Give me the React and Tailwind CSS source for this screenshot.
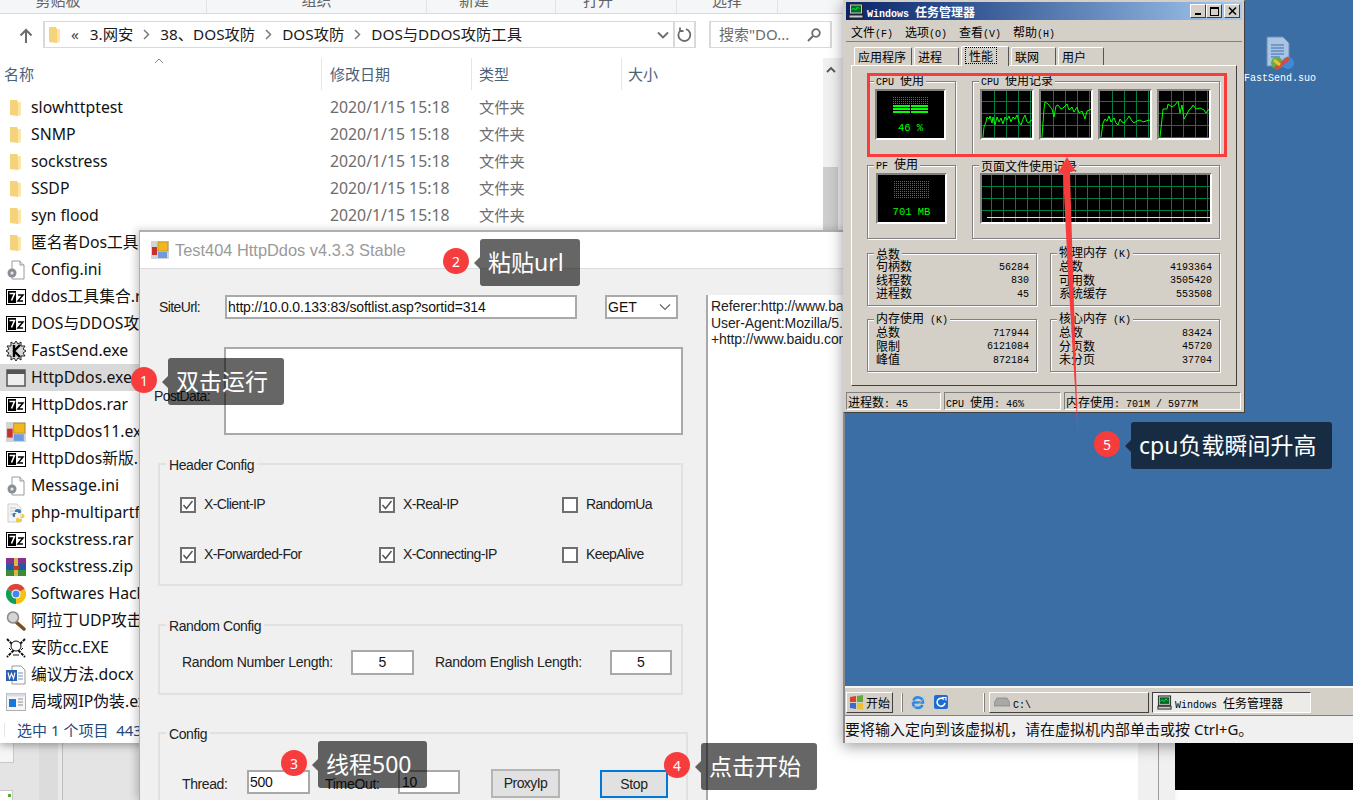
const CJK = "font-['Noto_Sans','Noto_Sans_CJK_SC',sans-serif]";

function Folder() {
  return (
    <svg width="14" height="18" viewBox="0 0 14 18">
      <path d="M1 1h7l1 2v14l-8-1z" fill="#f5d37a" />
      <path d="M9 3l3 0v13l-3 1z" fill="#fbe6a8" />
    </svg>
  );
}

function GearDoc() {
  return (
    <svg width="20" height="20" viewBox="0 0 20 20">
      <path d="M6 1h8l4 4v14H6z" fill="#fff" stroke="#9a9a9a" />
      <path d="M14 1v4h4" fill="#e5e5e5" stroke="#9a9a9a" />
      <circle cx="6" cy="13" r="4.5" fill="#8a8f96" />
      <circle cx="6" cy="13" r="1.6" fill="#e8e8e8" />
    </svg>
  );
}

function SevenZ() {
  return (
    <svg width="20" height="16" viewBox="0 0 20 16">
      <rect x="0.5" y="0.5" width="19" height="15" fill="#fff" stroke="#000" />
      <rect x="2" y="2" width="8" height="12" fill="#000" />
      <path d="M3.5 4.5h5l-3 7" fill="none" stroke="#fff" strokeWidth="1.6" />
      <path d="M12 6h5l-5 6h5" fill="none" stroke="#000" strokeWidth="1.5" />
    </svg>
  );
}

function KBurst() {
  return (
    <svg width="20" height="20" viewBox="0 0 20 20">
      <path d="M10 0l2 3 3-2 0 4 4 0-2 3 3 2-3 2 2 3-4 0 0 4-3-2-2 3-2-3-3 2 0-4-4 0 2-3-3-2 3-2-2-3 4 0 0-4 3 2z" fill="#d8d8d8" stroke="#222" strokeWidth="1" />
      <path d="M8 4v12M14 4l-6 6 6 6" fill="none" stroke="#000" strokeWidth="2.4" />
    </svg>
  );
}

function WinExe() {
  return (
    <svg width="20" height="18" viewBox="0 0 20 18">
      <rect x="1" y="1" width="18" height="16" fill="#eee" stroke="#555" strokeWidth="1.5" />
      <rect x="1" y="1" width="18" height="4" fill="#555" />
    </svg>
  );
}

function AppSquares({ size = 18 }) {
  return (
    <svg width={size} height={size} viewBox="0 0 18 18">
      <rect width="18" height="18" fill="#d4d4d4" />
      <rect x="7" y="1" width="10" height="9" fill="#f0b820" stroke="#a97f10" strokeWidth="0.6" />
      <rect x="1" y="6" width="5" height="8" fill="#c9302c" />
      <rect x="7" y="11" width="9" height="6" fill="#6d9be0" />
    </svg>
  );
}

function PyDoc() {
  return (
    <svg width="20" height="20" viewBox="0 0 20 20">
      <path d="M2 1h9l4 4v14H2z" fill="#f4f4f4" stroke="#cfcfcf" />
      <path d="M4 5h6M4 8h5M4 11h4" stroke="#c4c4c4" />
      <path d="M12 6c-3 0-3 1-3 3h3v1H8c-2 0-2 4 0 4h1v-2c0-1 1-2 2-2h3c1 0 1-1 1-2V8c0-1-1-2-3-2z" fill="#3c78aa" />
      <path d="M13 19c3 0 3-1 3-3h-3v-1h4c2 0 2-4 0-4h-1v2c0 1-1 2-2 2h-3c-1 0-1 1-1 2v1c0 1 1 2 3 1z" fill="#f5c93c" />
    </svg>
  );
}

function RarStack() {
  return (
    <svg width="20" height="18" viewBox="0 0 20 18">
      <rect width="20" height="6" fill="#8a2f8f" />
      <rect y="6" width="20" height="6" fill="#2458a6" />
      <rect y="12" width="20" height="6" fill="#3f8a3a" />
      <rect x="8" width="4" height="18" fill="#d9b64c" />
      <rect x="7" y="8" width="6" height="4" fill="#b5402c" />
    </svg>
  );
}

function ChromeIcon() {
  return (
    <svg width="20" height="20" viewBox="0 0 20 20">
      <path d="M10 10L1.3 5A10 10 0 0 1 18.7 5z" fill="#db4437" />
      <path d="M10 10L18.7 5A10 10 0 0 1 10 20z" fill="#f4c20d" />
      <path d="M10 10L10 20A10 10 0 0 1 1.3 5z" fill="#0f9d58" />
      <circle cx="10" cy="10" r="4.6" fill="#fff" />
      <circle cx="10" cy="10" r="3.5" fill="#4285f4" />
    </svg>
  );
}

function Magnifier() {
  return (
    <svg width="20" height="20" viewBox="0 0 20 20">
      <path d="M10 11l8 7" stroke="#7a4f22" strokeWidth="3.5" strokeLinecap="round" />
      <circle cx="7" cy="6.5" r="5.5" fill="#d5d5d5" stroke="#8a8a8a" strokeWidth="1.5" />
    </svg>
  );
}

function CrossBones() {
  return (
    <svg width="20" height="20" viewBox="0 0 20 20">
      <path d="M1 1l18 18M19 1L1 19" stroke="#111" strokeWidth="2" strokeDasharray="3 1" />
      <circle cx="10" cy="8" r="5" fill="#fff" stroke="#111" />
      <path d="M3 10l2 2M17 10l-2 2M7 17h6" stroke="#111" />
    </svg>
  );
}

function WordDoc() {
  return (
    <svg width="20" height="20" viewBox="0 0 20 20">
      <path d="M6 1h9l4 4v14H6z" fill="#fff" stroke="#9a9a9a" />
      <path d="M12 8h5M12 11h5M12 14h5" stroke="#6a8fc8" />
      <rect x="0" y="5" width="11" height="11" fill="#2b5fb4" />
      <path d="M2 7.5l1.5 6 2-5 2 5 1.5-6" fill="none" stroke="#fff" strokeWidth="1.1" />
    </svg>
  );
}

function BlueWin() {
  return (
    <svg width="20" height="18" viewBox="0 0 20 18">
      <rect x="0.5" y="0.5" width="19" height="17" fill="#f6f6f6" stroke="#b0b0b0" />
      <rect x="0.5" y="0.5" width="19" height="3" fill="#d5dbe5" />
      <rect x="3" y="6" width="7" height="8" fill="#1a78d8" />
      <path d="M12 6h5M12 9h5M12 12h5" stroke="#8a8a8a" />
    </svg>
  );
}

const files = [
  { name: "slowhttptest", icon: <Folder />, date: "2020/1/15 15:18", type: "文件夹" },
  { name: "SNMP", icon: <Folder />, date: "2020/1/15 15:18", type: "文件夹" },
  { name: "sockstress", icon: <Folder />, date: "2020/1/15 15:18", type: "文件夹" },
  { name: "SSDP", icon: <Folder />, date: "2020/1/15 15:18", type: "文件夹" },
  { name: "syn flood", icon: <Folder />, date: "2020/1/15 15:18", type: "文件夹" },
  { name: "匿名者Dos工具包", icon: <Folder /> },
  { name: "Config.ini", icon: <GearDoc /> },
  { name: "ddos工具集合.rar", icon: <SevenZ /> },
  { name: "DOS与DDOS攻防工具.rar", icon: <SevenZ /> },
  { name: "FastSend.exe", icon: <KBurst /> },
  { name: "HttpDdos.exe", icon: <WinExe />, selected: true },
  { name: "HttpDdos.rar", icon: <SevenZ /> },
  { name: "HttpDdos11.exe", icon: <AppSquares size={20} /> },
  { name: "HttpDdos新版.rar", icon: <SevenZ /> },
  { name: "Message.ini", icon: <GearDoc /> },
  { name: "php-multipartform-dos.py", icon: <PyDoc /> },
  { name: "sockstress.rar", icon: <SevenZ /> },
  { name: "sockstress.zip", icon: <RarStack /> },
  { name: "Softwares Hacking", icon: <ChromeIcon /> },
  { name: "阿拉丁UDP攻击器.exe", icon: <Magnifier /> },
  { name: "安防cc.EXE", icon: <CrossBones /> },
  { name: "编议方法.docx", icon: <WordDoc /> },
  { name: "局域网IP伪装.exe", icon: <BlueWin /> },
];

function Explorer() {
  return (
    <div className={`relative h-[743px] w-[843px] overflow-hidden bg-white shadow-[0_2px_8px_rgba(0,0,0,0.35)] ${CJK}`}>
      {/* ribbon, cut off at the top of the shot */}
      <div className="flex h-[14px] overflow-hidden border-b border-[#dadbdc] bg-[#f5f6f7] text-[15px] leading-[15px] text-[#5f6368]">
        <div className="-mt-[7px] flex w-[207px] justify-center border-r border-[#e1e3e6] pr-[90px]">剪贴板</div>
        <div className="-mt-[7px] flex w-[220px] justify-center border-r border-[#e1e3e6]">组织</div>
        <div className="-mt-[7px] flex w-[129px] justify-center border-r border-[#e1e3e6] pr-[34px]">新建</div>
        <div className="-mt-[7px] flex w-[121px] justify-center border-r border-[#e1e3e6] pr-[36px]">打开</div>
        <div className="-mt-[7px] flex w-[101px] justify-center border-r border-[#e1e3e6]">选择</div>
      </div>

      {/* address row */}
      <div className="flex h-[44px] items-start pt-[7px]">
        <svg width="16" height="18" viewBox="0 0 16 18" className="ml-[18px] mr-[9px] mt-[6px]">
          <path d="M8 16V3M2.5 8.5L8 3l5.500 5.500" fill="none" stroke="#6b6b6b" strokeWidth="2" />
        </svg>
        <div className="flex h-[27px] w-[653px] items-center border-2 border-y-[1.5px] border-[#d9d9d9] text-[15.300px] text-[#1a1a1a]">
          <span className="ml-[3px]"><Folder /></span>
          <span className="ml-[9px] text-[#444]">«</span>
          <span className="ml-[11px]">3.网安</span>
          <Chev />
          <span>38、DOS攻防</span>
          <Chev />
          <span>DOS攻防</span>
          <Chev />
          <span>DOS与DDOS攻防工具</span>
          <div className="ml-auto flex h-full w-[20px] items-center justify-center">
            <svg width="12" height="8" viewBox="0 0 12 8"><path d="M1 1.500l5 5 5-5" fill="none" stroke="#6b6b6b" strokeWidth="1.800" /></svg>
          </div>
          <div className="flex h-full w-[21px] items-center justify-center border-l-2 border-[#d9d9d9]">
            <svg width="16" height="16" viewBox="0 0 16 16"><path d="M9 2.200A6 6 0 1 1 4 3M3 0.500v3.500h3.500" fill="none" stroke="#6b6b6b" strokeWidth="1.800" /></svg>
          </div>
        </div>
        <div className="ml-[13px] flex h-[27px] w-[123px] items-center justify-between border-2 border-y-[1.5px] border-[#d9d9d9] pl-[8px] pr-[9px] text-[15px] text-[#6d6d6d]">
          <span>搜索"DO...</span>
          <svg width="14" height="14" viewBox="0 0 14 14"><circle cx="9" cy="5" r="3.800" fill="none" stroke="#6b6b6b" strokeWidth="1.800" /><path d="M6 8l-5 5" stroke="#6b6b6b" strokeWidth="2" /></svg>
        </div>
      </div>

      <div className="flex h-[685px]">
        <div className="flex w-[823px] flex-col">
          {/* column headers */}
          <div className="relative grid h-[32px] grid-cols-[322px_150px_150px_1fr] text-[15px] text-[#4c607a]">
            <div className="flex items-center border-r border-[#e5e5e5] pl-[4px]">名称</div>
            <div className="flex items-center border-r border-[#e5e5e5] pl-[8px]">修改日期</div>
            <div className="flex items-center border-r border-[#e5e5e5] pl-[7px]">类型</div>
            <div className="flex items-center pl-[6px]">大小</div>
            <svg width="10" height="6" viewBox="0 0 10 6" className="absolute left-[154px] top-0"><path d="M1 5l4-4 4 4" fill="none" stroke="#8a8a8a" /></svg>
          </div>
          {/* rows */}
          <div className="mt-[4px] flex flex-col">
            {files.map((f) => (
              <div key={f.name} className="grid h-[27px] grid-cols-[322px_150px_150px] items-center text-[15.800px] text-[#111]">
                <div className={`flex h-full items-center ${f.selected ? "bg-[#d9d9d9]" : ""}`}>
                  <span className="flex w-[31px] items-center justify-center pl-[1px]">{f.icon}</span>
                  <span className="truncate">{f.name}</span>
                </div>
                <span className="pl-[8px] text-[#6d6d6d]">{f.date}</span>
                <span className="pl-[7px] text-[15.300px] text-[#6d6d6d]">{f.type}</span>
              </div>
            ))}
          </div>
          <div className="mt-[2px] flex h-[26px] items-center pl-[4px] text-[15px] text-[#1f4a80]">
            <span className="mr-[12px] h-[14px] border-l border-[#e5e5e5]"></span>
            选中 1 个项目&nbsp;&nbsp;443 KB
          </div>
        </div>
        <div className="flex w-[20px] flex-col bg-[#f0f0f0]">
          <div className="flex h-[109px] justify-center pr-[5px] pt-[8px]">
            <svg width="10" height="7" viewBox="0 0 10 7"><path d="M1 6l4-4 4 4" fill="none" stroke="#555" strokeWidth="1.800" /></svg>
          </div>
          <div className="h-[300px] w-[15px] bg-[#cdcdcd]"></div>
        </div>
      </div>
    </div>
  );
}

function Chev() {
  return (
    <svg width="7" height="11" viewBox="0 0 7 11" className="mx-[10px]">
      <path d="M1 1l4.500 4.500L1 10" fill="none" stroke="#7a7a7a" strokeWidth="1.500" />
    </svg>
  );
}

/* whatever lies below the explorer window */
function BehindStrip() {
  return (
    <div className="flex h-[57px] w-[140px] bg-[#e4e4e4]">
      <div className="flex w-[39px] flex-col justify-between">
        <div className="h-[20px] w-[14px] border-b border-r border-[#c9c9c9] bg-[#f5f5f5]"></div>
        <div className="h-[10px] w-[13px] border-r border-t border-[#c9c9c9] bg-white">
          <div className="ml-[8px] mt-[3px] h-[3px] w-[3px] bg-[#56b02c]"></div>
        </div>
      </div>
      <div className="w-[19px] bg-[#dcdcdc]"></div>
      <div className="w-[4px] bg-[#e9e9e9]"></div>
      <div className="w-[1px] bg-[#bdbdbd]"></div>
    </div>
  );
}

function Field({ className, children }) {
  return (
    <div className={`flex items-center border-2 border-[#a9a9a9] bg-white text-[#111] ${className}`}>{children}</div>
  );
}

function FormGroup({ title, className, children }) {
  return (
    <div className={`ml-[18px] border-2 border-[#e1e1e1] ${className}`}>
      <div className="-mt-[9px] ml-[6px] h-[18px] w-fit bg-[#f0f0f0] px-[3px] text-[14px] leading-[18px] tracking-[-0.4px] text-[#222]">{title}</div>
      {children}
    </div>
  );
}

function Check({ label, checked }) {
  return (
    <div className="flex h-full items-center gap-[8px] pb-[1px] tracking-[-0.6px]">
      <span className="flex h-[16px] w-[16px] items-center justify-center border-2 border-[#6f6f6f] bg-white">
        {checked && (
          <svg width="12" height="12" viewBox="0 0 12 12"><path d="M1.500 6l3 3.500 6-7.500" fill="none" stroke="#555" strokeWidth="1.500" /></svg>
        )}
      </span>
      <span>{label}</span>
    </div>
  );
}

function HttpDdosWindow() {
  return (
    <div className="absolute left-[139px] top-[230px] flex h-[570px] w-[1036px] flex-col overflow-hidden border-l border-t-2 border-[#b0b0b0] bg-[#f0f0f0] font-['Liberation_Sans',sans-serif] text-[14px] text-[#222] shadow-[-3px_0_8px_rgba(0,0,0,0.2)]">
      <div className="flex h-[37px] shrink-0 items-center border-b border-[#dcdcdc] bg-white pl-[11px] text-[16.400px] text-[#9a9a9a]">
        <AppSquares />
        <span className="ml-[6px]">Test404 HttpDdos v4.3.3 Stable</span>
      </div>
      <div className="flex flex-1">
        <div className="w-[566px] shrink-0">
          <div className="ml-[19px] mt-[26px] flex h-[24px] items-center">
            <span className="w-[66px] pt-[1px] tracking-[-0.6px]">SiteUrl:</span>
            <Field className="h-full w-[352px] pl-[1px] tracking-[-0.15px]">http://10.0.0.133:83/softlist.asp?sortid=314</Field>
            <Field className="ml-[28px] h-full w-[73px] justify-between pl-[1px] pr-[5px]">
              GET
              <svg width="12" height="8" viewBox="0 0 12 8"><path d="M1 1.500l5 5 5-5" fill="none" stroke="#666" strokeWidth="1.200" /></svg>
            </Field>
          </div>
          <div className="ml-[14px] mt-[28px] flex h-[88px] items-center">
            <span className="w-[70px] pt-[10px] tracking-[-0.6px]">PostData:</span>
            <Field className="h-full w-[459px]"></Field>
          </div>

          <FormGroup title="Header Config" className="mt-[28px] h-[123px] w-[525px]">
            <div className="mt-[6px] grid grid-cols-[199px_183px_1fr] pl-[20px]">
              <div className="h-[50px]"><Check label="X-Client-IP" checked /></div>
              <div className="h-[50px]"><Check label="X-Real-IP" checked /></div>
              <div className="h-[50px]"><Check label="RandomUa" /></div>
              <div className="h-[50px]"><Check label="X-Forwarded-For" checked /></div>
              <div className="h-[50px]"><Check label="X-Connecting-IP" checked /></div>
              <div className="h-[50px]"><Check label="KeepAlive" /></div>
            </div>
          </FormGroup>

          <FormGroup title="Random Config" className="mt-[38px] h-[71px] w-[525px]">
            <div className="mt-[15px] flex h-[25px] items-center pl-[22px]">
              <span className="w-[169px] tracking-[-0.3px]">Random Number Length:</span>
              <Field className="h-full w-[63px] justify-center">5</Field>
              <span className="ml-[21px] w-[175px] tracking-[-0.3px]">Random English Length:</span>
              <Field className="h-full w-[62px] justify-center">5</Field>
            </div>
          </FormGroup>

          <FormGroup title="Config" className="mt-[37px] h-[100px] w-[530px]">
            <div className="mt-[27px] flex items-start pl-[22px]">
              <span className="w-[65px] pt-[4px] tracking-[-0.4px]">Thread:</span>
              <Field className="h-[24px] w-[63px] pl-[1px] tracking-[-0.3px]">500</Field>
              <span className="ml-[15px] w-[73px] pt-[4px] tracking-[-0.3px]">TimeOut:</span>
              <Field className="h-[24px] w-[62px] pl-[2px] tracking-[-0.3px]">10</Field>
              <button className="-mt-[1px] ml-[31px] h-[29px] w-[69px] border-2 border-[#b5b5b5] bg-[#e1e1e1] tracking-[-0.6px] text-[#222]">ProxyIp</button>
              <button className="ml-[40px] h-[28px] w-[68px] border-2 border-[#0078d7] bg-[#e1e1e1] tracking-[-0.3px] text-[#222]">Stop</button>
            </div>
          </FormGroup>
        </div>
        {/* request header text area */}
        <div className="mt-[26px] h-[600px] w-[432px] shrink-0 border-l-2 border-[#a9a9a9] bg-white pl-[3px] pt-[3px] text-[14px] leading-[16.500px] tracking-[-0.1px] text-[#222]">
          <div>Referer:http://www.baidu.com</div>
          <div>User-Agent:Mozilla/5.0 (compatible; Baiduspider/2.0;</div>
          <div>+http://www.baidu.com/search/spider.html)</div>
        </div>
        <div className="w-[21px] shrink-0 border-r border-[#9a9a9a]"></div>
      </div>
    </div>
  );
}

/* SimSun-like text: half width latin next to full width CJK */
function Sim({ children, className = "" }) {
  const parts = String(children).split(/([\x00-\x7f]+)/).filter(Boolean);
  return (
    <span className={`whitespace-pre ${className}`}>
      {parts.map((p, i) =>
        /^[\x00-\x7f]/.test(p) ? (
          <span key={i} className="font-['Liberation_Mono',monospace] text-[10px]">{p}</span>
        ) : (
          <span key={i} className="font-['Noto_Sans_CJK_SC',sans-serif] text-[12px]">{p}</span>
        )
      )}
    </span>
  );
}

function Frame({ title, className, children }) {
  return (
    <div className={`border border-[#808080] shadow-[1px_1px_0_#fff,inset_1px_1px_0_#fff] ${className}`}>
      <div className="-mt-[8px] ml-[6px] flex h-[14px] w-fit items-center bg-[#d4d0c8] px-[2px] leading-[14px] text-black">
        <Sim>{title}</Sim>
      </div>
      {children}
    </div>
  );
}

function Inset({ className, children }) {
  return (
    <div className={`border-2 border-b-white border-l-[#808080] border-r-white border-t-[#808080] bg-black ${className}`}>{children}</div>
  );
}

const GRID_X = [13, 25, 37, 49];
const GRID_Y = [12, 24, 36, 48];

function CpuGraph({ points }) {
  return (
    <Inset className="h-[51px] w-[54px]">
      <svg width="50" height="47" viewBox="1 2 50 47" className="block">
        {GRID_X.map((x) => <path key={x} d={`M${x + 0.5} 0V50`} stroke="#008040" shapeRendering="crispEdges" />)}
        {GRID_Y.map((y) => <path key={y} d={`M0 ${y + 0.5}H54`} stroke="#008040" shapeRendering="crispEdges" />)}
        <polyline points={points} fill="none" stroke="#00ff00" strokeWidth="1" />
      </svg>
    </Inset>
  );
}

function Meter({ filled, value }) {
  const dim = filled ? [0, 2, 4, 6] : [0, 2, 4, 6, 8, 10, 12, 14, 16];
  const lit = filled ? [8, 11, 14] : [];
  return (
    <Inset className="flex h-[51px] w-[71px] flex-col items-center pt-[6px]">
      <svg width="35" height="18" viewBox="0 0 35 18" className="block">
        {dim.map((y) => (
          <g key={y}>
            <path d={`M0 ${y + 0.5}H17`} stroke="#00a030" strokeDasharray="1 1" shapeRendering="crispEdges" />
            <path d={`M18 ${y + 0.5}H35`} stroke="#00a030" strokeDasharray="1 1" shapeRendering="crispEdges" />
          </g>
        ))}
        {lit.map((y) => (
          <path key={y} d={`M0 ${y + 1}H17M18 ${y + 1}H35`} stroke="#00ff00" strokeWidth="2" shapeRendering="crispEdges" />
        ))}
      </svg>
      <span className="mt-[7px] font-['Liberation_Mono',monospace] text-[10.500px] leading-[12px] text-[#00ff00]">{value}</span>
    </Inset>
  );
}

function Stats({ title, rows, className }) {
  return (
    <Frame title={title} className={`h-[53px] w-[170px] ${className}`}>
      <div className="-mt-[1px] flex flex-col pl-[8px] pr-[7px]">
        {rows.map(([k, v]) => (
          <div key={k} className="flex h-[13.500px] items-center justify-between leading-[13px] text-black">
            <Sim>{k}</Sim>
            <Sim>{v}</Sim>
          </div>
        ))}
      </div>
    </Frame>
  );
}

function TabLabel({ children, active, className }) {
  return (
    <div className={`flex items-center rounded-t-[2px] border-l border-r border-t border-l-white border-r-[#555] border-t-white bg-[#d4d0c8] pl-[3px] ${active ? "-mb-[1px] h-[20px] pb-[2px]" : "h-[18px]"} ${className}`}>
      <span className={active ? "border border-dotted border-black px-[3px] leading-[14px]" : "leading-[14px]"}><Sim>{children}</Sim></span>
    </div>
  );
}

function WinBtn({ children }) {
  return (
    <div className="flex h-[14px] w-[16px] items-center justify-center border border-b-[#404040] border-l-white border-r-[#404040] border-t-white bg-[#d4d0c8]">{children}</div>
  );
}

function TaskIcon({ size }) {
  return (
    <svg width={size} height={size} viewBox="0 0 16 16" className="shrink-0">
      <rect x="1.500" y="1" width="13" height="10" fill="#c8c8c8" stroke="#222" />
      <rect x="3" y="2.500" width="10" height="7" fill="#063" />
      <path d="M3.500 7l2-2 2 2 2-3 2 2" stroke="#0f0" fill="none" />
      <rect x="1" y="12" width="14" height="3" fill="#c8c8c8" stroke="#222" />
    </svg>
  );
}

function TaskManager() {
  return (
    <div className="absolute -left-[2px] top-0 h-[413px] w-[402px] border border-b-[#404040] border-l-[#d4d0c8] border-r-[#404040] border-t-[#d4d0c8] bg-[#d4d0c8] px-[2px] pt-[1px] text-black">
      <div className="flex h-[18px] items-center bg-gradient-to-r from-[#0a246a] to-[#a6caf0] px-[2px]">
        <TaskIcon size={16} />
        <span className="ml-[3px] font-bold text-white"><Sim>Windows 任务管理器</Sim></span>
        <div className="ml-auto flex items-center">
          <WinBtn><span className="mt-[6px] h-[2px] w-[6px] bg-black"></span></WinBtn>
          <WinBtn><span className="h-[9px] w-[9px] border border-t-2 border-black"></span></WinBtn>
          <span className="w-[2px]"></span>
          <WinBtn>
            <svg width="9" height="8" viewBox="0 0 9 8"><path d="M1 0.500l7 7M8 0.500l-7 7" stroke="#000" strokeWidth="1.500" /></svg>
          </WinBtn>
        </div>
      </div>
      <div className="flex h-[21px] items-center gap-[12px] pl-[5px] shadow-[0_1px_0_#808080]">
        <Sim>文件(F)</Sim>
        <Sim>选项(O)</Sim>
        <Sim>查看(V)</Sim>
        <Sim>帮助(H)</Sim>
      </div>

      <div className="mt-[5px] flex items-end gap-[2px] pl-[8px]">
        <TabLabel className="w-[58px]">应用程序</TabLabel>
        <TabLabel className="w-[45px]">进程</TabLabel>
        <TabLabel active className="w-[48px]">性能</TabLabel>
        <TabLabel className="w-[45px]">联网</TabLabel>
        <TabLabel className="w-[46px]">用户</TabLabel>
      </div>

      <div className="ml-[5px] h-[321px] w-[386px] border border-b-[#404040] border-l-white border-r-[#404040] border-t-white pl-[15px] pt-[15px]">
        <div className="flex gap-[16px]">
          <Frame title="CPU 使用" className="h-[74px] w-[89px]">
            <div className="ml-[7px] mt-[1px]"><Meter filled value="46 %" /></div>
          </Frame>
          <Frame title="CPU 使用记录" className="h-[74px] w-[248px]">
            <div className="ml-[7px] mt-[1px] flex gap-[5px]">
              <CpuGraph points="2,48 3,38 5,33 6,28 8,30 9,27 11,34 12,28 14,36 16,28 18,33 20,29 22,35 24,28 26,31 28,27 30,33 32,28 34,30 36,26 38,33 40,36 42,30 44,26 46,33 48,34 50,31 53,32" />
              <CpuGraph points="2,48 4,20 5,13 8,15 12,20 14,28 16,17 18,16 21,20 23,19 27,15 29,21 32,18 34,23 37,18 39,24 42,22 45,30 47,22 52,20" />
              <CpuGraph points="2,48 4,34 6,30 8,32 10,27 12,33 15,29 17,34 19,36 21,30 23,33 25,34 29,29 30,27 33,32 35,34 38,32 41,31 44,33 47,32 50,31 53,32" />
              <CpuGraph points="2,48 4,30 5,20 9,20 10,15 14,18 17,16 20,12 22,24 24,16 26,30 29,25 31,21 34,18 35,16 38,20 42,19 46,21 48,24 50,21 53,20" />
            </div>
          </Frame>
        </div>

        <div className="mt-[10px] flex gap-[16px]">
          <Frame title="PF 使用" className="h-[74px] w-[89px]">
            <div className="ml-[8px] mt-[1px]"><Meter value="701 MB" /></div>
          </Frame>
          <Frame title="页面文件使用记录" className="h-[74px] w-[248px]">
            <Inset className="ml-[7px] mt-[1px] h-[51px] w-[232px]">
              <svg width="228" height="47" viewBox="0 0 228 47" className="block">
                {Array.from({ length: 19 }, (_, i) => <path key={i} d={`M${9.5 + i * 12} 0V47`} stroke="#008040" shapeRendering="crispEdges" />)}
                {[11, 23, 35].map((y) => <path key={y} d={`M0 ${y + 0.5}H228`} stroke="#008040" shapeRendering="crispEdges" />)}
                <path d="M5 42.500H228" stroke="#ffff00" shapeRendering="crispEdges" />
              </svg>
            </Inset>
          </Frame>
        </div>

        <div className="mt-[14px] flex gap-[13px]">
          <Stats title="总数" rows={[["句柄数", "56284"], ["线程数", "830"], ["进程数", "45"]]} />
          <Stats title="物理内存 (K)" rows={[["总数", "4193364"], ["可用数", "3505420"], ["系统缓存", "553508"]]} />
        </div>
        <div className="mt-[13px] flex gap-[13px]">
          <Stats title="内存使用 (K)" rows={[["总数", "717944"], ["限制", "6121084"], ["峰值", "872184"]]} />
          <Stats title="核心内存 (K)" rows={[["总数", "83424"], ["分页数", "45720"], ["未分页", "37704"]]} />
        </div>
      </div>

      <div className="mt-[6px] flex h-[18px] gap-[3px]">
        <StatusCell className="w-[95px]">进程数: 45</StatusCell>
        <StatusCell className="w-[117px]">CPU 使用: 46%</StatusCell>
        <StatusCell className="w-[177px]">内存使用: 701M / 5977M</StatusCell>
      </div>
    </div>
  );
}

function StatusCell({ className, children }) {
  return (
    <div className={`flex items-center border border-b-white border-l-[#808080] border-r-white border-t-[#808080] pl-[1px] ${className}`}>
      <Sim>{children}</Sim>
    </div>
  );
}

function VmTaskbar() {
  return (
    <div className="flex h-[30px] shrink-0 items-center border-t-2 border-[#f4f4f0] bg-[#d4d0c8] pl-[1px] text-black shadow-[inset_0_-1px_0_#808080]">
      <div className="flex h-[21px] w-[47px] items-center border border-b-[#404040] border-l-white border-r-[#404040] border-t-white pl-[2px]">
        <svg width="15" height="15" viewBox="0 0 15 15" className="mr-[2px]">
          <path d="M1 2l6-1v6H1z" fill="#d8442a" />
          <path d="M8 1l6-1v7H8z" fill="#6aa83a" />
          <path d="M1 8h6v6l-6-1z" fill="#3a6cc8" />
          <path d="M8 8h6v7l-6-1z" fill="#f0c030" />
        </svg>
        <Sim>开始</Sim>
      </div>
      <span className="ml-[8px] h-[19px] w-[2px] border-l border-r border-l-white border-r-[#808080]"></span>
      <svg width="16" height="16" viewBox="0 0 16 16" className="ml-[7px]">
        <path d="M2.500 8.500h10.500A5 5 0 0 0 3.400 6.500M3 8.500a5 5 0 0 0 9.500 2.500" fill="none" stroke="#2f8ae0" strokeWidth="2.600" />
        <path d="M14 1.500c1.500 1.500-2 6-6 9s-7 4.500-7 3" fill="none" stroke="#9fc8ee" strokeWidth="0.900" />
      </svg>
      <svg width="16" height="16" viewBox="0 0 16 16" className="ml-[7px]">
        <rect x="1" y="1" width="14" height="14" rx="2" fill="#1f6cd0" />
        <path d="M11 5.500A4 4 0 1 0 12 9" fill="none" stroke="#fff" strokeWidth="1.500" />
        <path d="M9 3.500h4v3" fill="none" stroke="#fff" strokeWidth="1.200" />
      </svg>
      <span className="ml-[34px] h-[19px] w-[2px] border-l border-r border-l-white border-r-[#808080]"></span>
      <div className="ml-[4px] flex h-[21px] w-[160px] items-center border border-b-[#404040] border-l-white border-r-[#404040] border-t-white pl-[4px]">
        <svg width="16" height="10" viewBox="0 0 16 10" className="mr-[3px]">
          <path d="M3 1h10l3 5v3H0V6z" fill="#a8a8a8" stroke="#777" strokeWidth="0.600" />
        </svg>
        <Sim>C:\</Sim>
      </div>
      <div className="ml-[3px] flex h-[21px] w-[159px] items-center border border-b-white border-l-[#404040] border-r-white border-t-[#404040] bg-[#ecebe7] pl-[4px]">
        <span className="mr-[3px]"><TaskIcon size={15} /></span>
        <Sim>Windows 任务管理器</Sim>
      </div>
    </div>
  );
}

function VmWindow() {
  return (
    <div className="absolute left-[843px] top-0 flex h-[743px] w-[510px] flex-col border-l-2 border-[#8a8a8a] shadow-[0_3px_14px_rgba(0,0,0,0.4)]">
      <div className="relative flex-1 bg-[#3a6ea5]">
        <TaskManager />
        {/* desktop icon */}
        <div className="absolute left-[400px] top-[36px] flex w-[70px] flex-col items-center">
          <svg width="30" height="34" viewBox="0 0 30 34">
            <path d="M2 1h16l6 6v23H2z" fill="#a9c4e4" stroke="#6f8db0" />
            <path d="M6 9h13M6 12h13M6 15h13M6 18h13M6 21h9" stroke="#3f6ea8" />
            <ellipse cx="12" cy="27" rx="6" ry="6" fill="#5fb04a" />
            <ellipse cx="23" cy="27" rx="6" ry="6" fill="#3f8ad8" />
            <path d="M10 33L24 22" stroke="#d84a3a" strokeWidth="4" />
            <path d="M9 24l6 5" stroke="#f0c030" strokeWidth="3" />
          </svg>
          <span className="mt-[3px] whitespace-nowrap font-['Liberation_Mono',monospace] text-[10px] leading-[12px] text-white">FastSend.suo</span>
        </div>
      </div>
      <VmTaskbar />
      <div className={`flex h-[27px] shrink-0 items-center bg-[#f0f0f0] text-[15px] text-[#111] ${CJK}`}>
        要将输入定向到该虚拟机，请在虚拟机内部单击或按 Ctrl+G。
      </div>
    </div>
  );
}

function Note({ num, text, className }) {
  return (
    <div className={`absolute flex h-[47px] items-center ${CJK} ${className}`}>
      <span className="mb-[3px] flex h-[26px] w-[26px] items-center justify-center rounded-full bg-[#f63c3c] text-[14px] text-white">{num}</span>
      <span className="ml-[5px] h-0 w-0 border-y-[6px] border-r-[6px] border-y-transparent border-r-black/60"></span>
      <span className="flex h-full items-center whitespace-nowrap rounded-[3px] bg-black/60 pl-[8px] pr-[16px] text-[23px] text-white">{text}</span>
    </div>
  );
}

export default function App() {
  return (
    <div className="relative h-[800px] w-[1353px] overflow-hidden bg-white">
      <Explorer />
      <BehindStrip />
      <div className="absolute left-[1175px] top-[743px] h-[47px] w-[178px] bg-black"></div>
      <HttpDdosWindow />
      <VmWindow />

      {/* red highlight round the cpu graphs */}
      <div className="absolute left-[867px] top-[73px] h-[84px] w-[360px] border-[3px] border-[#f63c3c]"></div>
      <svg width="30" height="285" viewBox="1055 155 30 285" className="absolute left-[1055px] top-[155px]">
        <path d="M1067 157L1075 171L1070 172L1073 273L1078 437L1068 273L1063 173L1058 173Z" fill="#f63c3c" />
      </svg>

      <Note num="1" text="双击运行" className="left-[131px] top-[358px]" />
      <Note num="2" text="粘贴url" className="left-[443px] top-[239px]" />
      <Note num="3" text="线程500" className="left-[281px] top-[741px]" />
      <Note num="4" text="点击开始" className="left-[664px] top-[743px]" />
      <Note num="5" text="cpu负载瞬间升高" className="left-[1094px] top-[422px]" />
    </div>
  );
}
